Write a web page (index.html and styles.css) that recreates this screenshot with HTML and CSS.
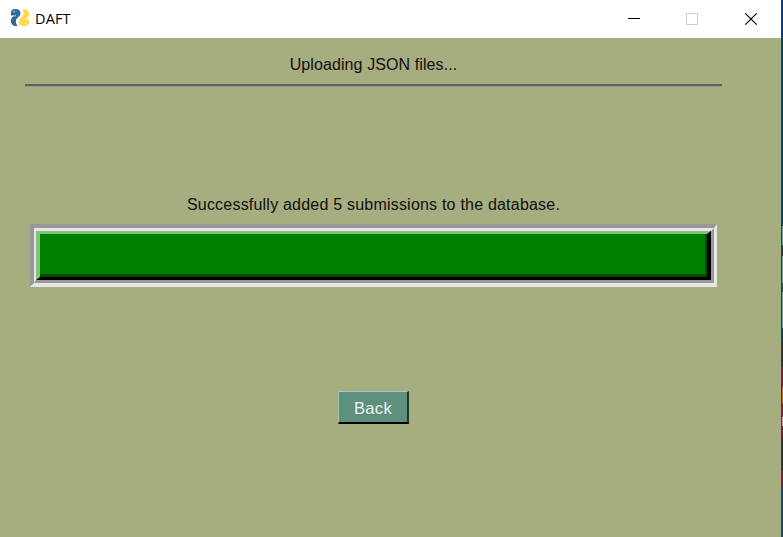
FILE: index.html
```html
<!DOCTYPE html>
<html lang="en">
<head>
<meta charset="utf-8">
<title>DAFT</title>
<link rel="stylesheet" href="styles.css">
</head>
<body>
<div class="desktop">
  <main class="window">
    <header class="titlebar">
      <svg class="logo" width="20" height="20" viewBox="0 0 20 20">
        <path d="M1 4.200C1 2 3.200 1 5.500 1c3 0 5 1.400 5 4.200 0 3.600-3.800 4.300-4.500 7-.5 2 .4 4 1.500 5.500-2.600.9-4.700-.2-5.800-2-1.700-2.800-.8-5.500 1.800-7.500H6V7.500H1.300C.7 6.500.7 5.300 1 4.200z" fill="#30699c"/>
        <path d="M12.300 1.600c2.500-1 5-.2 6.200 2 1.500 2.800.3 5.300-2 7.200h-2.200v.8H19c.8 1.400.6 3.600-.5 5-1.500 1.900-5.300 2.300-7.700 1-2.400-1.300-2.800-4.200-1.200-6.300 1.500-2 3.800-3.200 4-5.700.1-1.500-.3-2.800-1.300-4z" fill="#ffd94d"/>
        <circle cx="4.200" cy="3.700" r=".7" fill="#fff"/>
        <circle cx="15.500" cy="15.700" r=".7" fill="#fff"/>
      </svg>
      <h1 class="title">DAFT</h1>
      <svg class="controls" width="138" height="38" viewBox="0 0 138 38">
        <path d="M14 18.500h12" stroke="#000"/>
        <path d="M72.500 13.500h11v11h-11z" fill="none" stroke="#ccc"/>
        <path d="M131.300 13.300l11.400 11.400m0-11.400l-11.400 11.400" fill="none" stroke="#000" stroke-width="1.200"/>
      </svg>
    </header>
    <section class="content">
      <p class="heading">Uploading JSON files...</p>
      <hr class="rule">
      <p class="status">Successfully added 5 submissions to the database.</p>
      <div class="progress"><div class="groove"><div class="bar"><div class="fill"></div></div></div></div>
      <button class="back">Back</button>
    </section>
  </main>
  <div class="backdrop"></div>
</div>
</body>
</html>
```
FILE: styles.css
```css
* { box-sizing: border-box; }
body { margin: 0; overflow: hidden; }
.desktop { display: flex; width: 783px; height: 537px; }
.window { width: 781px; background: #a6ad7f; }
.titlebar { display: flex; align-items: center; height: 38px; padding-left: 10px; background: #fff; }
.logo { margin-top: -2px; }
.title { margin: -1px 0 0 5px; font: 400 14.5px/20px "Open Sans", sans-serif; color: #000; letter-spacing: .15px; }
.controls { margin-left: auto; margin-right: 29px; overflow: visible; }
.content { display: flex; flex-direction: column; align-items: center; width: 747px; font: 16px/20px "Liberation Sans", Arial, sans-serif; color: #101010; }
.heading { margin: 17px 0 0; white-space: nowrap; letter-spacing: .1px; }
.rule { width: 697px; height: 3px; margin: 9px 0 0; border: 0; border-top: 2px solid #626262; background: #969696; }
.status { margin: 108px 0 0; white-space: nowrap; letter-spacing: .21px; }
.progress { width: 687px; height: 63px; margin-top: 9px; border: solid; border-width: 4px 3px 4px 4px; border-color: #999 #e6e6e6 #e6e6e6 #999; }
.groove { height: 100%; border: solid; border-width: 3px 3px 3px 2px; border-color: #e6e6e6 #999 #999 #e6e6e6; }
.bar { height: 100%; border: solid; border-width: 3px 4px 3px 4px; border-color: #7fc37f #000 #000 #7fc37f; }
.fill { height: 100%; background: #008000; border: solid #004800; border-width: 0 2px 3px 0; }
.back { width: 71px; height: 33px; margin-top: 104px; padding: 2px 0 0; border: solid; border-width: 1px 2px 2px 1px; border-color: #a7c6bb #20332d #000 #a7c6bb; background: #5d907d; color: #f0f4f2; font: 16.5px/20px "Liberation Sans", Arial, sans-serif; letter-spacing: .3px; }
.backdrop { width: 2px; background: linear-gradient(#003e70 0 226px, #5ca0a6 226px 245px, #1e3746 245px 256px, #5ca0a6 256px 283px, #294653 283px 292px, #5ca0a6 292px 328px, #0b3d66 328px 342px, #292d30 342px 366px, #7c2142 366px 387px, #b76a2b 387px 403px, #84203f 403px 417px, #c8a4b0 417px 426px, #7c1838 426px 437px, #252b2f 437px 470px, #7c2142 470px 487px, #0b4570 487px); border-left: 1px solid #234752; }
```
